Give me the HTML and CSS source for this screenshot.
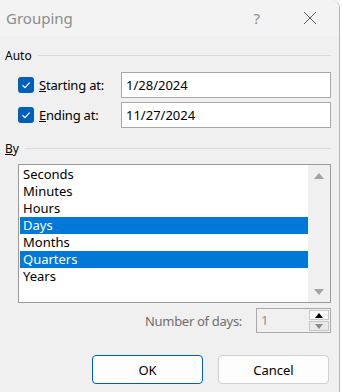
FILE: index.html
```html
<!DOCTYPE html>
<html lang="en">
<head>
	<meta charset="UTF-8">
	<title>Grouping</title>
	<link rel="stylesheet" href="styles.css">
</head>
<body>

<div class="dialog">
	<div class="titlebar">
		<span class="title">Grouping</span>
		<span class="help">?</span>
		<svg class="close" width="14" height="14" viewBox="0 0 14 14">
			<path d="M1 1 L13 13 M13 1 L1 13" stroke="#5c5c5c" stroke-width="1" fill="none"/>
		</svg>
	</div>

	<div class="content">
		<div class="group-head"><span>Auto</span><div class="rule"></div></div>

		<div class="auto-row">
			<label class="check-label">
				<span class="check">
					<svg width="16" height="16" viewBox="0 0 16 16"><path d="M4.5 8.2 L7 10.6 L11.6 5.6" stroke="white" stroke-width="1.2" fill="none"/></svg>
				</span>
				<span><u>S</u>tarting at:</span>
			</label>
			<div class="textbox">1/28/2024</div>
		</div>
		<div class="auto-row">
			<label class="check-label">
				<span class="check">
					<svg width="16" height="16" viewBox="0 0 16 16"><path d="M4.5 8.2 L7 10.6 L11.6 5.6" stroke="white" stroke-width="1.2" fill="none"/></svg>
				</span>
				<span><u>E</u>nding at:</span>
			</label>
			<div class="textbox">11/27/2024</div>
		</div>

		<div class="group-head by-head"><span><u>B</u>y</span><div class="rule"></div></div>

		<div class="listbox">
			<div class="items">
				<div class="item">Seconds</div>
				<div class="item">Minutes</div>
				<div class="item">Hours</div>
				<div class="item selected">Days</div>
				<div class="item">Months</div>
				<div class="item selected">Quarters</div>
				<div class="item">Years</div>
			</div>
			<div class="scrollbar">
				<svg width="10" height="6" viewBox="0 0 10 6"><path d="M0 6 L5 0 L10 6 Z" fill="#a3a3a3"/></svg>
				<svg width="10" height="6" viewBox="0 0 10 6"><path d="M0 0 L5 6 L10 0 Z" fill="#a3a3a3"/></svg>
			</div>
		</div>

		<div class="number-row">
			<span class="number-label">Number of days:</span>
			<div class="spinner">
				<div class="spin-value">1</div>
				<div class="spin-buttons">
					<div class="spin-btn"><svg width="8" height="5" viewBox="0 0 8 5"><path d="M0 5 L4 0 L8 5 Z" fill="#000"/></svg></div>
					<div class="spin-btn"><svg width="8" height="5" viewBox="0 0 8 5"><path d="M0 0 L4 5 L8 0 Z" fill="#8a8a8a"/></svg></div>
				</div>
			</div>
		</div>

		<div class="buttons">
			<button class="btn default">OK</button>
			<button class="btn">Cancel</button>
		</div>
	</div>
</div>

</body>
</html>
```

FILE: styles.css
```css
html, body {
	margin: 0;
	background: white;
}

body {
	font-family: 'Noto Sans', sans-serif;
	font-size: 12px;
	color: #000;
}

.dialog {
	width: 339px;
	height: 400px;
	background: #f0f0f0;
	border-right: 1px solid #b5b5b5;
	border-top-right-radius: 8px;
	overflow: hidden;
}

.titlebar {
	height: 36px;
	background: #f3f3f3;
	display: flex;
	align-items: center;
}

.title {
	margin-left: 6px;
	font-size: 15px;
	color: #8c8c8c;
	flex: 1;
}

.help {
	font-size: 15px;
	color: #8c8c8c;
	margin-right: 43px;
}

.close {
	margin-right: 22px;
}

.content {
	padding: 0 8px 0 5px;
}

.group-head {
	display: flex;
	align-items: center;
	height: 16px;
	margin-top: 11px;
}

.group-head .rule {
	flex: 1;
	height: 1px;
	background: #dadada;
	margin-left: 6px;
}

.by-head {
	margin-top: 12px;
}

.auto-row {
	display: flex;
	align-items: center;
	height: 26px;
	margin: 9px 0 0 13px;
}
.auto-row + .auto-row {
	margin-top: 4px;
}

.check-label {
	display: flex;
	align-items: center;
	width: 103px;
	font-size: 13px;
	letter-spacing: -0.2px;
}

.check {
	width: 16px;
	height: 16px;
	border-radius: 3px;
	background: #005fb8;
	margin-right: 5px;
	line-height: 0;
}

.textbox {
	flex: 1;
	box-sizing: border-box;
	height: 26px;
	border: 1px solid #a9a9a9;
	background: white;
	padding-left: 4px;
	display: flex;
	align-items: center;
	font-size: 13px;
}

.listbox {
	display: flex;
	margin: 8px 0 0 13px;
	height: 139px;
	box-sizing: border-box;
	border: 1px solid #9a9a9a;
	background: white;
	padding: 1px 0 1px 1px;
}

.items {
	flex: 1;
}

.item {
	height: 17px;
	line-height: 17px;
	padding-left: 3px;
	font-size: 13px;
}

.item.selected {
	background: #0078d7;
	color: white;
}

.scrollbar {
	width: 22px;
	background: #f0f0f0;
	display: flex;
	flex-direction: column;
	align-items: center;
	justify-content: space-between;
	padding: 8px 0 7px;
	box-sizing: border-box;
	margin-top: -1px;
	margin-bottom: -1px;
}

.number-row {
	display: flex;
	justify-content: flex-end;
	align-items: center;
	margin-top: 5px;
	height: 25px;
}

.number-label {
	color: #6e6e6e;
	font-size: 13px;
	letter-spacing: -0.3px;
	margin-right: 14px;
}

.spinner {
	width: 75px;
	height: 25px;
	box-sizing: border-box;
	border: 1px solid #a9a9a9;
	display: flex;
	background: #f0f0f0;
}

.spin-value {
	flex: 1;
	color: #8d8d8d;
	padding-left: 4px;
	font-size: 13px;
	line-height: 23px;
}

.spin-buttons {
	width: 20px;
	display: flex;
	flex-direction: column;
	gap: 1px;
	padding: 1px 1px 1px 0;
}

.spin-btn {
	flex: 1;
	background: #fafafa;
	border: 1px solid #c8c8c8;
	display: flex;
	align-items: center;
	justify-content: center;
}
.spin-btn + .spin-btn {
	background: #e9e9e9;
}

.buttons {
	display: flex;
	justify-content: flex-end;
	gap: 15px;
	margin: 22px 2px 0 0;
}

.btn {
	width: 111px;
	height: 29px;
	border: 1px solid #d0d0d0;
	border-radius: 4px;
	background: #fdfdfd;
	font-family: inherit;
	font-size: 13px;
	color: #000;
}

.btn.default {
	border-color: #005fb8;
}
```
